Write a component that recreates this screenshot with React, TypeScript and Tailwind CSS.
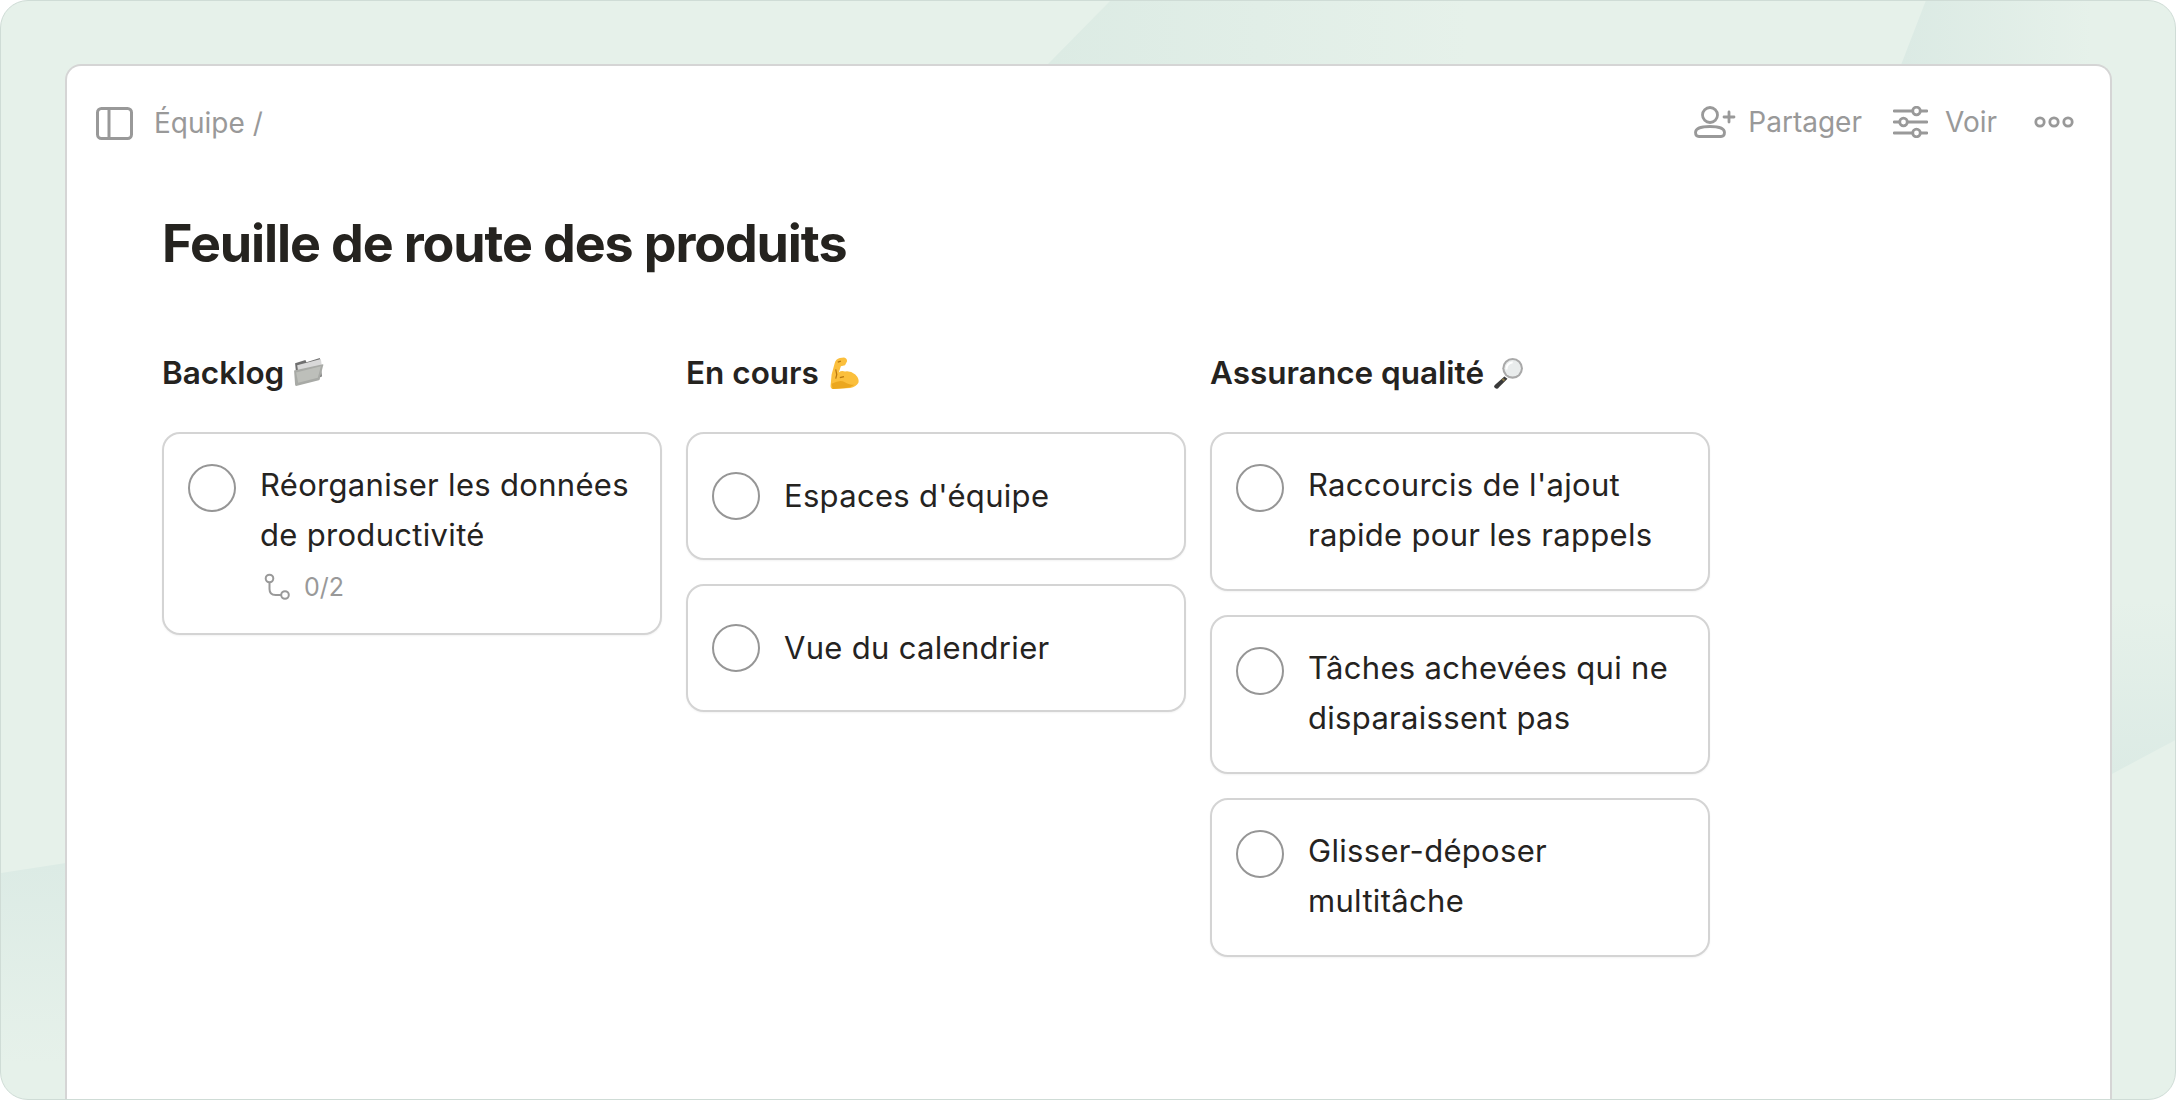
import React from 'react';

function FolderEmoji() {
  return (
    <svg width="33" height="33" viewBox="0 0 32 32" className="shrink-0">
      <path d="M3 6 L13 3 L14 5 L27 1 L29 19 L5 27 Z" fill="#6f6f6f" />
      <path d="M5 8 L28 2 L29 9 L6 14 Z" fill="#d9d9d9" />
      <path d="M2 13 L30 7 Q31 7 30 9 L27 21 Q27 22 26 22.500 L4 28 Q3 28 3 27 Z" fill="#a8aaa6" />
      <path d="M4 15 L28 9 L25 20 L6 25 Z" fill="#bdbfba" />
    </svg>
  );
}

function MuscleEmoji() {
  return (
    <svg width="32" height="33" viewBox="0 0 30 32" className="ml-[2px] shrink-0">
      <path
        d="M5 6 Q6 2 10 1 L14 0.500 Q17 1 17 4 L15 8 L11 9 L9 15 Q11 13 15 14 Q20 13 25 17 Q29 21 28 25 Q26 29 20 30 L4 31 Q1 31 1 28 L2 17 Z"
        fill="#fbbf3c"
      />
      <path d="M2 26 Q10 22 14 24 Q18 27 24 27 Q20 30 16 30 L3 31 Z" fill="#eba71f" />
      <path d="M6 12 L7 17 L6 21 M10 20 L14 19 M8 5 L11 4" stroke="#b9770e" strokeWidth="1.200" fill="none" />
    </svg>
  );
}

function LoupeEmoji() {
  return (
    <svg width="33" height="33" viewBox="0 0 32 32" className="shrink-0">
      <path d="M12 19 L3 27 Q1 29 3 30 Q5 32 7 29 L15 21 Z" fill="#3a3a3a" />
      <path d="M10 21 L12 23" stroke="#8a7a4a" strokeWidth="2" />
      <circle cx="20" cy="11" r="10" fill="#a9a9a9" />
      <circle cx="20" cy="11" r="8" fill="#e9ecec" />
      <path d="M14 12 Q14 6 20 5" stroke="#ffffff" strokeWidth="2" fill="none" />
    </svg>
  );
}

function SubtaskIcon() {
  return (
    <svg width="28" height="28" viewBox="0 0 28 28" fill="none" stroke="#999999" strokeWidth="2" className="shrink-0">
      <circle cx="6.500" cy="5.500" r="3.800" />
      <circle cx="22" cy="22" r="3.800" />
      <path d="M6.500 9.300 V16 Q6.500 22 12.500 22 H18.200" />
    </svg>
  );
}

function SidebarIcon() {
  return (
    <svg width="37" height="33" viewBox="0 0 37 33" fill="none" stroke="#999999" strokeWidth="3" className="shrink-0">
      <rect x="1.500" y="1.500" width="34" height="30" rx="4" />
      <path d="M13 1.500 V31.500" />
    </svg>
  );
}

function ShareIcon() {
  return (
    <svg width="42" height="32" viewBox="0 0 42 32" fill="none" stroke="#999999" strokeWidth="2.800" strokeLinecap="round" className="shrink-0">
      <circle cx="16" cy="9" r="7.500" />
      <path d="M1.500 26.500 Q1.500 20.500 16 20.500 Q30.500 20.500 30.500 26.500 Q30.500 30.500 27 30.500 H5 Q1.500 30.500 1.500 26.500 Z" />
      <path d="M30 11 H40 M35 6 V16" />
    </svg>
  );
}

function SlidersIcon() {
  return (
    <svg width="35" height="32" viewBox="0 0 35 32" fill="none" stroke="#999999" strokeWidth="2.800" strokeLinecap="round" className="shrink-0">
      <path d="M1 5 H19 M28 5 H34 M1 16 H6 M15 16 H34 M1 27 H19 M28 27 H34" />
      <circle cx="23.500" cy="5" r="3.800" />
      <circle cx="10.500" cy="16" r="3.800" />
      <circle cx="23.500" cy="27" r="3.800" />
    </svg>
  );
}

function DotsIcon() {
  return (
    <svg width="40" height="12" viewBox="0 0 40 12" fill="none" stroke="#999999" strokeWidth="2.800" className="shrink-0">
      <circle cx="6" cy="6" r="4.200" />
      <circle cx="20" cy="6" r="4.200" />
      <circle cx="34" cy="6" r="4.200" />
    </svg>
  );
}

function Card({ lines, subtasks }: { lines: string[]; subtasks?: string }) {
  const single = lines.length === 1;
  return (
    <div
      className={`flex gap-6 rounded-[18px] border-2 border-[#d4d4d4] bg-white pl-6 pr-4 shadow-[0_1px_2px_rgba(0,0,0,0.05)] ${
        single ? 'h-[128px] items-center' : 'pt-[26px] pb-[29px] items-start'
      }`}
    >
      <div className={`h-[48px] w-[48px] shrink-0 rounded-full border-2 border-[#969696] ${single ? '' : 'mt-1'}`} />
      <div className="min-w-0">
        <div className="text-[31px] leading-[50px] tracking-[0.01em] text-[#25231f]">
          {lines.map((line) => (
            <div key={line} className="whitespace-nowrap">
              {line}
            </div>
          ))}
        </div>
        {subtasks && (
          <div className="mb-[2px] mt-[12px] flex h-[30px] items-center gap-[13px] pl-[3px] text-[25px] leading-[30px] text-[#999999]">
            <SubtaskIcon />
            {subtasks}
          </div>
        )}
      </div>
    </div>
  );
}

function Column({ title, emoji, children }: { title: string; emoji: React.ReactNode; children: React.ReactNode }) {
  return (
    <div className="flex w-[500px] flex-col gap-6">
      <h2 className="mb-[15px] flex h-[40px] items-center gap-2 text-[31.5px] font-semibold leading-[40px] text-[#25231f]">
        {title}
        {emoji}
      </h2>
      {children}
    </div>
  );
}

export default function App() {
  return (
    <div className="relative h-[1100px] w-[2176px] overflow-hidden font-['Inter',sans-serif]">
      <div className="relative flex h-full flex-col overflow-hidden rounded-[28px] border border-[#cfdcd6] bg-[#e6f1ea] pl-[64px] pr-[63px] pt-[63px]">
        {/* soft darker washes in the backdrop */}
        <div className="absolute left-[1046px] top-0 h-[64px] w-[420px] bg-gradient-to-r from-[#dcebe4] to-[#e6f1ea] [clip-path:polygon(15%_0,100%_0,100%_100%,0_100%)]" />
        <div className="absolute left-[1900px] top-0 h-[64px] w-[190px] bg-gradient-to-r from-[#dbeae4] to-[#e6f1ea] [clip-path:polygon(13%_0,100%_0,100%_100%,0_100%)]" />
        <div className="absolute left-0 top-[862px] h-[200px] w-[65px] bg-gradient-to-b from-[#dcebe5] to-[#e6f1ea] [clip-path:polygon(0_5%,100%_0,100%_100%,0_100%)]" />
        <div className="absolute right-0 top-[600px] h-[174px] w-[65px] bg-gradient-to-b from-[#e6f1ea] to-[#dcebe5] [clip-path:polygon(0_0,100%_0,100%_80%,0_100%)]" />

        <div className="relative flex min-h-0 flex-1 flex-col rounded-t-[16px] border-2 border-b-0 border-[#d5d5d5] bg-white">
          <header className="flex h-[112px] items-center pl-[29px] pr-[36px] pt-[2px] text-[28px] leading-[36px] text-[#999999]">
            <SidebarIcon />
            <span className="ml-[21px]">Équipe /</span>
            <div className="ml-auto flex items-center pb-[2px]">
              <ShareIcon />
              <span className="ml-[12px]">Partager</span>
              <div className="ml-[31px]">
                <SlidersIcon />
              </div>
              <span className="ml-[17px]">Voir</span>
              <div className="ml-[37px]">
                <DotsIcon />
              </div>
            </div>
          </header>

          <main className="pl-[95px] pt-[30px]">
            <h1 className="h-[72px] text-[52px] font-bold leading-[72px] tracking-[-0.0215em] text-[#25231f]">
              Feuille de route des produits
            </h1>
            <div className="mt-[73px] flex gap-6">
              <Column title="Backlog" emoji={<FolderEmoji />}>
                <Card lines={['Réorganiser les données', 'de productivité']} subtasks="0/2" />
              </Column>
              <Column title="En cours" emoji={<MuscleEmoji />}>
                <Card lines={["Espaces d'équipe"]} />
                <Card lines={['Vue du calendrier']} />
              </Column>
              <Column title="Assurance qualité" emoji={<LoupeEmoji />}>
                <Card lines={["Raccourcis de l'ajout", 'rapide pour les rappels']} />
                <Card lines={['Tâches achevées qui ne', 'disparaissent pas']} />
                <Card lines={['Glisser-déposer', 'multitâche']} />
              </Column>
            </div>
          </main>
        </div>
      </div>
    </div>
  );
}
